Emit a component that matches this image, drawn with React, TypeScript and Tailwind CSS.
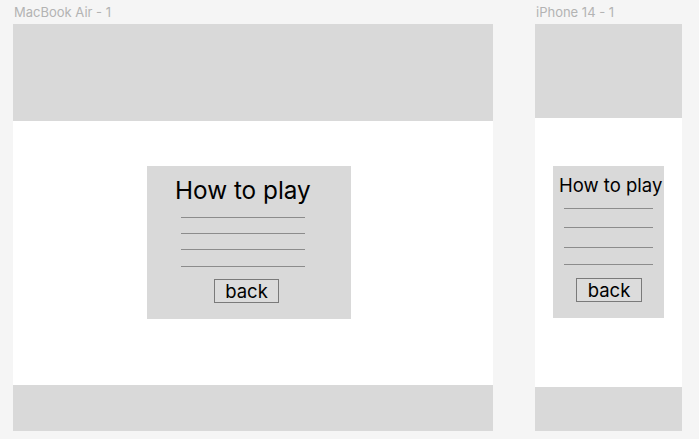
import * as React from "react";

const HowToPlayCard: React.FC<{ compact?: boolean }> = ({ compact }) => {
  if (compact) {
    return (
      <div className="ml-[18px] mt-[48px] flex h-[152px] w-[111px] flex-col bg-[#d9d9d9] pt-[8px]">
        <h2 className="ml-[6px] whitespace-nowrap text-[18.5px] leading-[22px] text-black">How to play</h2>
        <div className="ml-[11px] mt-[12px] flex w-[89px] flex-col">
          <div className="h-px bg-[#8c8c8c]" />
          <div className="mt-[18px] h-px bg-[#8c8c8c]" />
          <div className="mt-[19px] h-px bg-[#8c8c8c]" />
          <div className="mt-[16px] h-px bg-[#8c8c8c]" />
        </div>
        <button className="ml-[23px] mt-[13px] h-[24px] w-[66px] border border-[#7a7a7a] bg-[#dcdcdc] text-[18.5px] leading-[20px] text-black">
          back
        </button>
      </div>
    );
  }

  return (
    <div className="ml-[134px] mt-[45px] flex h-[153px] w-[204px] flex-col bg-[#d9d9d9] pt-[10px]">
      <h2 className="ml-[28px] whitespace-nowrap text-[24.3px] leading-[29px] text-black">How to play</h2>
      <div className="ml-[34px] mt-[12px] flex w-[124px] flex-col">
        <div className="h-px bg-[#8c8c8c]" />
        <div className="mt-[15px] h-px bg-[#8c8c8c]" />
        <div className="mt-[15px] h-px bg-[#8c8c8c]" />
        <div className="mt-[16px] h-px bg-[#8c8c8c]" />
      </div>
      <button className="ml-[67px] mt-[12px] h-[24px] w-[65px] border border-[#7a7a7a] bg-[#dcdcdc] text-[18.5px] leading-[20px] text-black">
        back
      </button>
    </div>
  );
};

export default function App() {
  return (
    <div className="flex h-[439px] w-[699px] gap-[42px] overflow-hidden bg-[#f5f5f5] pl-[13px] font-['Inter',sans-serif]">
      {/* MacBook frame */}
      <div className="flex w-[480px] flex-col">
        <div className="h-[24px] pl-px pt-[4px] text-[13px] leading-[16px] text-[#b3b3b3]">MacBook Air - 1</div>
        <div className="flex h-[407px] flex-col bg-white">
          <div className="h-[97px] bg-[#d9d9d9]" />
          <div className="flex-1">
            <HowToPlayCard />
          </div>
          <div className="h-[46px] bg-[#d9d9d9]" />
        </div>
      </div>

      {/* iPhone frame */}
      <div className="flex w-[147px] flex-col">
        <div className="h-[24px] pl-px pt-[4px] text-[13px] leading-[16px] text-[#b3b3b3]">iPhone 14 - 1</div>
        <div className="flex h-[407px] flex-col bg-white">
          <div className="h-[94px] bg-[#d9d9d9]" />
          <div className="flex-1">
            <HowToPlayCard compact />
          </div>
          <div className="h-[44px] bg-[#d9d9d9]" />
        </div>
      </div>
    </div>
  );
}
